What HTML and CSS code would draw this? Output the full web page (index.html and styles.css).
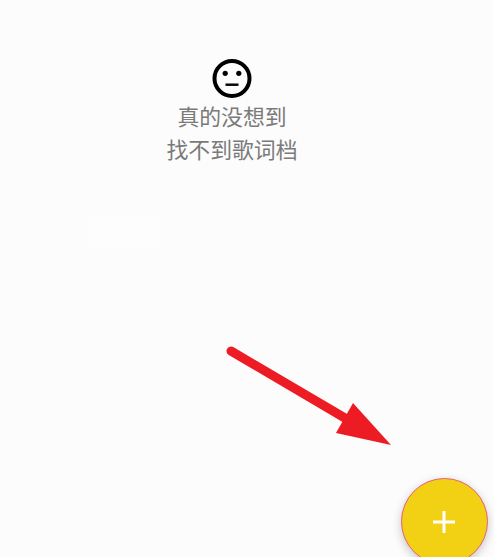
FILE: index.html
```html
<!DOCTYPE html>
<html lang="zh">
<head>
<meta charset="utf-8">
<title>歌词</title>
<link rel="stylesheet" href="styles.css">
</head>
<body>
<main class="screen">
  <section class="empty">
    <svg class="face" viewBox="0 0 40 40" aria-hidden="true">
      <circle cx="20" cy="20" r="17.5" fill="none" stroke="#000" stroke-width="4"/>
      <circle cx="13.2" cy="14.8" r="2.6" fill="#000"/>
      <circle cx="26.8" cy="14.8" r="2.6" fill="#000"/>
      <rect x="13.5" y="25" width="13" height="2.4" fill="#000"/>
    </svg>
    <p class="message">真的没想到</p>
    <p class="message">找不到歌词档</p>
  </section>
  <div class="patch"></div>
  <svg class="arrow" viewBox="0 0 494 557" aria-hidden="true">
    <line x1="231" y1="351" x2="350" y2="421" stroke="#ed1c24" stroke-width="9" stroke-linecap="round"/>
    <polygon points="353,403 391,445 336,433" fill="#ed1c24"/>
  </svg>
  <button class="fab" aria-label="添加">
    <svg class="plus" viewBox="0 0 22 22" aria-hidden="true">
      <path d="M0 11H22M11 0V22" stroke="#fff" stroke-width="3" fill="none"/>
    </svg>
  </button>
</main>
</body>
</html>
```
FILE: styles.css
```css
html, body {
  margin: 0;
  padding: 0;
  height: 100%;
  overflow: hidden;
}
.screen {
  position: relative;
  width: 494px;
  height: 557px;
  overflow: hidden;
  background: #fcfcfc;
  font-family: "Noto Sans CJK SC", "Noto Sans", sans-serif;
}
.empty {
  display: flex;
  flex-direction: column;
  align-items: center;
  width: 464px;
  padding-top: 58px;
}
.face {
  display: block;
  width: 40px;
  height: 41px;
}
.message {
  margin: 0;
  height: 33px;
  line-height: 33px;
  font-size: 21.85px;
  font-weight: 400;
  color: #7a7a7a;
}
.patch {
  position: absolute;
  left: 85px;
  top: 212px;
  width: 73px;
  height: 38px;
  background: #fff;
  opacity: 0.4;
  filter: blur(5px);
}
.arrow {
  position: absolute;
  left: 0;
  top: 0;
  width: 494px;
  height: 557px;
}
.fab {
  position: absolute;
  left: 401px;
  top: 478px;
  box-sizing: border-box;
  display: flex;
  align-items: center;
  justify-content: center;
  width: 87px;
  height: 87px;
  padding: 0 1px 0 0;
  border: 1px solid #e8607a;
  border-radius: 50%;
  background: #f2d013;
  box-shadow: 0 3px 10px rgba(0, 0, 0, 0.22);
}
.plus {
  display: block;
  width: 22px;
  height: 22px;
}
```
